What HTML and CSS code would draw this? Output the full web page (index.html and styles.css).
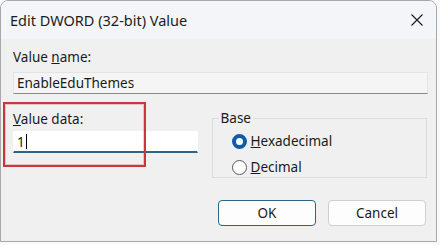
FILE: index.html
```
<!DOCTYPE html>
<html lang="en">

<head>
  <meta charset="UTF-8" />
  <title>Edit DWORD (32-bit) Value</title>
  <link rel="stylesheet" href="styles.css">
</head>

<body>
  <div class="window">
    <header class="titlebar">
      <span class="title">Edit DWORD (32-bit) Value</span>
      <svg class="close" width="12" height="12" viewBox="0 0 12 12">
        <path d="M0.5 0.5 L11.5 11.5 M11.5 0.5 L0.5 11.5" stroke="#1a1a1a" stroke-width="1.1" fill="none" />
      </svg>
    </header>

    <main class="content">
      <label class="label name-label">Value <u>n</u>ame:</label>
      <div class="field name-field">EnableEduThemes</div>

      <div class="lower">
        <div class="data-col">
          <label class="label"><u>V</u>alue data:</label>
          <div class="field data-field">1<span class="caret"></span></div>
        </div>

        <fieldset class="base">
          <legend>Base</legend>
          <div class="radio-row">
            <span class="radio checked"></span>
            <span><u>H</u>exadecimal</span>
          </div>
          <div class="radio-row">
            <span class="radio"></span>
            <span><u>D</u>ecimal</span>
          </div>
        </fieldset>
      </div>

      <div class="buttons">
        <button class="btn default">OK</button>
        <button class="btn">Cancel</button>
      </div>
    </main>

    <div class="highlight"></div>
  </div>
</body>

</html>
```

FILE: styles.css
```
* {
  margin: 0;
  padding: 0;
  box-sizing: border-box;
}

html,
body {
  background: #fafafa;
  font-family: 'Noto Sans', 'Open Sans', sans-serif;
  color: #1a1a1a;
  overflow: hidden;
}

.window {
  position: relative;
  width: 437px;
  height: 242px;
  border: 1px solid #a8a8a8;
  border-radius: 8px 8px 0 0;
  background: #f0f0f0;
  overflow: hidden;
}

.titlebar {
  height: 38px;
  display: flex;
  align-items: center;
  justify-content: space-between;
  padding: 0 13px 0 9px;
  background: #f3f5f8;
}

.title {
  font-size: 14.5px;
  color: #1c1c1c;
}

.close {
  display: block;
}

.content {
  padding: 9px 9px 0 12px;
}

.label {
  display: block;
  font-size: 13.5px;
  line-height: 18px;
}

.field {
  height: 22px;
  font-size: 13.5px;
  line-height: 20px;
  padding: 0 3px;
  border: 1px solid #e4e4e4;
  border-bottom-color: #8a8a8a;
}

.name-field {
  margin-top: 6px;
  background: #f5f5f5;
  width: 415px;
}

.lower {
  display: flex;
  gap: 14px;
  margin-top: 16px;
}

.data-col {
  width: 185px;
}

.data-field {
  margin-top: 3px;
  background: #fff;
  border-color: #fff;
  border-bottom: 2px solid #2e6486;
  display: flex;
  align-items: center;
}

.caret {
  display: inline-block;
  width: 1px;
  height: 15px;
  background: #000;
  margin-left: 1px;
}

.base {
  width: 216px;
  height: 68px;
  border: 1px solid #dcdcdc;
  padding: 2px 0 0 0;
  font-size: 13.5px;
}

.base legend {
  padding: 0 2px;
  margin-left: 6px;
  line-height: 16px;
}

.radio-row {
  display: flex;
  align-items: center;
  gap: 4px;
  height: 26px;
  padding-left: 19px;
}

.radio {
  width: 15px;
  height: 15px;
  border-radius: 50%;
  border: 1px solid #5a5a5a;
  background: #fff;
}

.radio.checked {
  border: 4px solid #0f5ca8;
  background: #fff;
}

.buttons {
  display: flex;
  justify-content: flex-end;
  gap: 12px;
  margin-top: 22px;
  padding-right: 1px;
}

.btn {
  width: 98px;
  height: 26px;
  font-family: inherit;
  font-size: 13.5px;
  color: #1a1a1a;
  background: #fdfdfd;
  border: 1px solid #d0d0d0;
  border-radius: 4px;
}

.btn.default {
  border-color: #2e6486;
}

.highlight {
  position: absolute;
  left: 2px;
  top: 101px;
  width: 143px;
  height: 65px;
  border: 2px solid #c8363e;
  box-shadow: inset 0 0 0 1px rgba(200, 54, 62, 0.25);
}
```
